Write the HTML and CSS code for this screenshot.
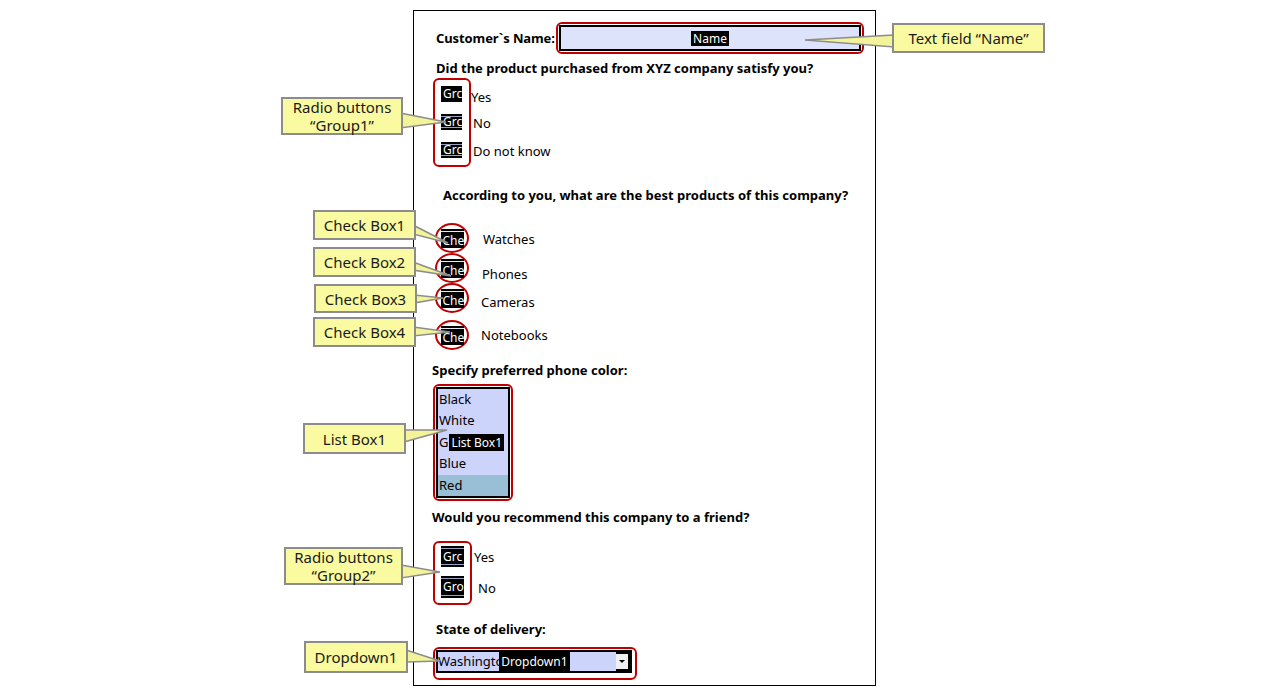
FILE: index.html
```html
<!DOCTYPE html>
<html lang="en">
<head>
    <meta charset="UTF-8">
    <title>Customer survey form</title>
    <link rel="stylesheet" href="styles.css">
</head>
<body>

    <!-- Form sheet -->
    <div class="sheet">
        <div class="name-row">
            <span class="field-label">Customer`s Name:</span>
            <div class="mark">
                <div class="text-field"><span class="tag">Name</span></div>
            </div>
        </div>

        <p class="question q-first">Did the product purchased from XYZ company satisfy you?</p>
        <div class="radio-group g1">
            <div class="mark radio-mark">
                <span class="ctl">Grc</span>
                <span class="ctl focus">Grc</span>
                <span class="ctl focus">Grc</span>
            </div>
            <div class="radio-labels">
                <div>Yes</div>
                <div>No</div>
                <div>Do not know</div>
            </div>
        </div>

        <p class="question q-products">According to you, what are the best products of this company?</p>
        <div class="checks">
            <div class="check-row">
                <div class="check-mark"><span class="check-ctl">Che</span></div>
                <span class="check-text">Watches</span>
            </div>
            <div class="check-row">
                <div class="check-mark"><span class="check-ctl">Che</span></div>
                <span class="check-text">Phones</span>
            </div>
            <div class="check-row">
                <div class="check-mark"><span class="check-ctl">Che</span></div>
                <span class="check-text">Cameras</span>
            </div>
            <div class="check-row">
                <div class="check-mark"><span class="check-ctl">Che</span></div>
                <span class="check-text">Notebooks</span>
            </div>
        </div>

        <p class="question q-color">Specify preferred phone color:</p>
        <div class="mark list-mark">
            <div class="listbox">
                <div class="list-item">Black</div>
                <div class="list-item">White</div>
                <div class="list-item">G<span class="tag">List Box1</span></div>
                <div class="list-item">Blue</div>
                <div class="list-item selected">Red</div>
            </div>
        </div>

        <p class="question q-friend">Would you recommend this company to a friend?</p>
        <div class="radio-group g2">
            <div class="mark radio-mark">
                <span class="ctl focus">Grc</span>
                <span class="ctl focus">Gro</span>
            </div>
            <div class="radio-labels">
                <div>Yes</div>
                <div>No</div>
            </div>
        </div>

        <p class="question q-state">State of delivery:</p>
        <div class="mark dd-mark">
            <div class="dropdown">
                <span class="dd-value">Washington</span>
                <span class="tag">Dropdown1</span>
                <span class="dd-fill"></span>
                <span class="dd-button"></span>
            </div>
        </div>
    </div>

    <!-- Annotations -->
    <svg class="pointers" width="1279" height="695" viewBox="0 0 1279 695">
        <polygon points="894,35 805,40 894,47" />
        <polygon points="400,113 446,122 400,128" />
        <polygon points="413,225 448,243 413,234" />
        <polygon points="413,262 451,276 413,270" />
        <polygon points="414,295 443,298 414,303" />
        <polygon points="413,327 450,332 413,336" />
        <polygon points="404,430 447,430 404,442" />
        <polygon points="401,565 440,572 401,578" />
        <polygon points="406,650 440,661 406,662" />
    </svg>

    <div class="callout c-name">Text field “Name”</div>
    <div class="callout c-group1">Radio buttons<br>“Group1”</div>
    <div class="callout c-check1">Check Box1</div>
    <div class="callout c-check2">Check Box2</div>
    <div class="callout c-check3">Check Box3</div>
    <div class="callout c-check4">Check Box4</div>
    <div class="callout c-list">List Box1</div>
    <div class="callout c-group2">Radio buttons<br>“Group2”</div>
    <div class="callout c-dropdown">Dropdown1</div>

</body>
</html>
```

FILE: styles.css
```css
body {
    margin: 0;
    font-family: "Noto Sans", "Open Sans", sans-serif;
    color: #000;
    background-color: #fff;
}

.sheet {
    width: 463px;
    box-sizing: border-box;
    margin: 10px 0 0 413px;
    border: 1px solid #000;
    padding: 11px 0 5px 18px;
    font-size: 13px;
}

/* red marks round the controls */
.mark {
    border: 2px solid #c00000;
    border-radius: 6px;
    padding: 1px;
    box-sizing: border-box;
}

.tag {
    background-color: #000;
    color: #fff;
    font-size: 12px;
    line-height: 15px;
    padding: 0 2px;
    white-space: nowrap;
}

.name-row {
    display: flex;
    align-items: center;
    margin-left: 4px;
}

.field-label {
    width: 120px;
    flex-shrink: 0;
    font-weight: bold;
    white-space: nowrap;
    letter-spacing: -0.1px;
}

.text-field {
    width: 302px;
    height: 26px;
    box-sizing: border-box;
    border: 2px solid #000;
    background-color: #dde3fb;
    display: flex;
    align-items: center;
    justify-content: center;
}

.question {
    font-weight: bold;
    line-height: 18px;
    margin: 0;
}

.q-first { margin: 5px 0 0 4px; }
.q-products { margin: 19px 0 0 11px; }
.q-color { margin-top: 11px; }
.q-friend { margin-top: 7px; }
.q-state { margin: 15px 0 0 4px; }

/* radio groups */
.radio-group {
    display: flex;
    margin-left: 1px;
}

.g1 { margin-top: 1px; }
.g2 { margin-top: 15px; }

.radio-mark {
    display: flex;
    flex-direction: column;
    align-items: flex-start;
}

.g1 .radio-mark {
    width: 38px;
    height: 89px;
    padding: 6px 0 0 6px;
    gap: 12px;
}

.g2 .radio-mark {
    width: 39px;
    height: 64px;
    padding: 3px 0 0 6px;
    gap: 9px;
}

.ctl {
    display: block;
    width: 21px;
    height: 16px;
    box-sizing: border-box;
    background-color: #000;
    color: #fff;
    font-size: 12px;
    line-height: 16px;
    padding-left: 2px;
    overflow: hidden;
    white-space: nowrap;
}

.g2 .ctl {
    width: 23px;
    height: 21px;
    line-height: 21px;
    font-size: 12px;
}

.g2 .ctl + .ctl {
    height: 22px;
    line-height: 22px;
}

.ctl.focus {
    box-shadow: inset 0 2px #000, inset 0 3px #9aa0c0, inset 0 -2px #000, inset 0 -3px #9aa0c0;
}

.radio-labels div {
    line-height: 18px;
}

.g1 .radio-labels { padding-top: 10px; }
.g1 .radio-labels div + div { margin-top: 8px; padding-left: 2px; }
.g1 .radio-labels div:last-child { margin-top: 10px; }

.g2 .radio-labels { padding: 7px 0 0 2px; }
.g2 .radio-labels div + div { margin-top: 13px; padding-left: 4px; }

/* check boxes */
.checks {
    margin: 19px 0 0 3px;
}

.check-row {
    display: flex;
    align-items: center;
    height: 30px;
}

.check-row:last-child { margin-top: 7px; }

.check-mark {
    width: 34px;
    height: 30px;
    box-sizing: border-box;
    border: 2px solid #c00000;
    border-radius: 50%;
    display: flex;
    align-items: center;
    justify-content: center;
}

.check-ctl {
    display: block;
    width: 23px;
    height: 19px;
    box-sizing: border-box;
    background-color: #000;
    color: #fff;
    font-size: 12px;
    line-height: 23px;
    padding-left: 2px;
    overflow: hidden;
    white-space: nowrap;
    box-shadow: inset 0 2px #000, inset 0 3px #e8e8f0;
}

.check-text {
    margin-left: 14px;
    line-height: 18px;
}

.check-row:nth-child(1) .check-text { padding-top: 2px; }
.check-row:nth-child(2) .check-text { padding-top: 12px; margin-left: 13px; }
.check-row:nth-child(3) .check-text { padding-top: 8px; margin-left: 12px; }
.check-row:nth-child(4) .check-text { margin-left: 12px; }

/* list box */
.list-mark {
    width: 80px;
    margin: 5px 0 0 1px;
}

.listbox {
    width: 74px;
    box-sizing: border-box;
    border: 2px solid #000;
    background-color: #ccd4fc;
}

.list-item {
    height: 21.4px;
    line-height: 21.4px;
    padding-left: 1px;
}

.list-item .tag {
    margin-left: 1px;
}

.list-item.selected {
    background-color: #99bfd6;
}

/* dropdown */
.dd-mark {
    width: 204px;
    padding: 1px 3px 5px 1px;
    margin: 9px 0 0 1px;
}

.dropdown {
    height: 23px;
    background-color: #000;
    display: flex;
    align-items: center;
    padding: 0 4px 0 2px;
}

.dd-value {
    width: 63px;
    height: 19px;
    line-height: 19px;
    background-color: #ccd4fc;
    overflow: hidden;
    white-space: nowrap;
}

.dd-fill {
    width: 48px;
    height: 19px;
    background-color: #ccd4fc;
}

.dd-button {
    margin-left: auto;
    width: 12px;
    height: 15px;
    background-color: #f0f0f0;
    display: flex;
    align-items: center;
    justify-content: center;
}

.dd-button::after {
    content: "";
    border-left: 3px solid transparent;
    border-right: 3px solid transparent;
    border-top: 3px solid #000;
}

/* callouts */
.pointers {
    position: absolute;
    top: 0;
    left: 0;
}

.pointers polygon {
    fill: #f3f39a;
    stroke: #8c8c8c;
    stroke-width: 1.5;
}

.callout {
    position: absolute;
    box-sizing: border-box;
    background-color: #fafaa0;
    border: 2px solid #8c8c8c;
    font-size: 15px;
    line-height: 18px;
    color: #1a1a1a;
    text-align: center;
    display: flex;
    align-items: center;
    justify-content: center;
}

.c-name { left: 892px; top: 23px; width: 153px; height: 30px; }
.c-group1 { left: 281px; top: 97px; width: 122px; height: 38px; }
.c-check1 { left: 313px; top: 210px; width: 103px; height: 30px; }
.c-check2 { left: 313px; top: 247px; width: 103px; height: 30px; }
.c-check3 { left: 314px; top: 284px; width: 103px; height: 29px; }
.c-check4 { left: 313px; top: 317px; width: 103px; height: 30px; }
.c-list { left: 303px; top: 423px; width: 103px; height: 31px; }
.c-group2 { left: 284px; top: 547px; width: 119px; height: 38px; }
.c-dropdown { left: 304px; top: 641px; width: 104px; height: 32px; }
```
